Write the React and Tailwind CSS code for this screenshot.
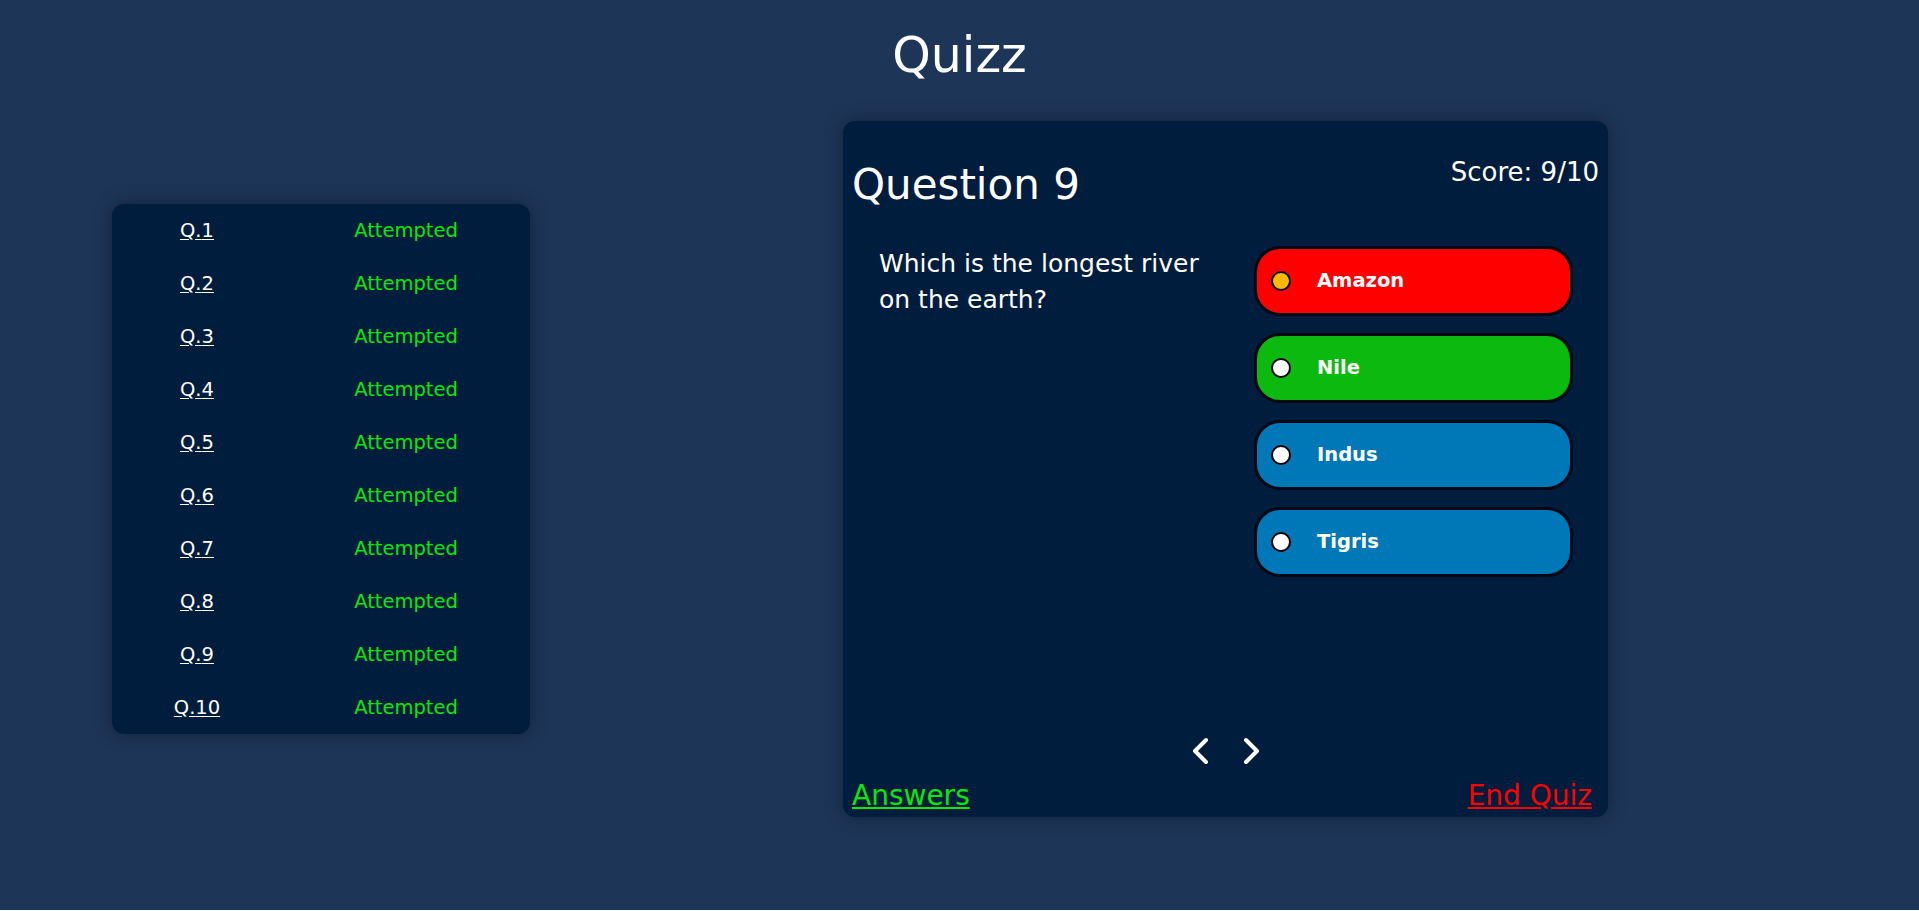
import React from "react";

const rows = Array.from({ length: 10 }, (_, i) => i + 1);

const options = [
  { label: "Amazon", bg: "bg-[#ff0000]", dot: "bg-[#ffb703]" },
  { label: "Nile", bg: "bg-[#0cb90f]", dot: "bg-white" },
  { label: "Indus", bg: "bg-[#0077b6]", dot: "bg-white" },
  { label: "Tigris", bg: "bg-[#0077b6]", dot: "bg-white" },
];

export default function App() {
  return (
    <div className="h-[910px] bg-[#1d3557] font-['DejaVu_Sans',Verdana,sans-serif] text-white">
      <div className="pt-[31px] text-center text-[49px] leading-[49px]">Quizz</div>
      <div className="mt-[41px] flex items-center pl-[112px] gap-[313px]">
        {/* Left list */}
        <div className="w-[418px] rounded-[12px] bg-[#001d3d] shadow-[0_0_18px_rgba(0,0,0,0.35)]">
          {rows.map((n) => (
            <div key={n} className="grid h-[53px] grid-cols-[170px_248px] items-center text-[19.5px]">
              <span className="text-center underline underline-offset-2">Q.{n}</span>
              <span className="text-center text-[#0ce60c]">Attempted</span>
            </div>
          ))}
        </div>

        {/* Card */}
        <div className="flex h-[696px] w-[765px] flex-col rounded-[12px] bg-[#001d3d] pt-[32px] shadow-[0_0_18px_rgba(0,0,0,0.35)]">
          <div className="flex items-start justify-between px-[9px]">
            <div className="text-[42px]">Question 9</div>
            <div className="text-[26px]">Score: 9/10</div>
          </div>
          <div className="mt-[30px] flex items-start pl-[36px] pr-[35px]">
            <div className="w-[340px] text-[25px] leading-[36px]">
              Which is the longest river on the earth?
            </div>
            <div className="ml-auto flex w-[319px] flex-col gap-[17px]">
              {options.map((o) => (
                <div
                  key={o.label}
                  className={`flex h-[70px] items-center rounded-[26px] border-[3px] border-[#000814] ${o.bg}`}
                >
                  <span className={`ml-[14px] h-[20px] w-[20px] rounded-full border-2 border-black ${o.dot}`} />
                  <span className="ml-[26px] text-[19.5px] font-bold">{o.label}</span>
                </div>
              ))}
            </div>
          </div>
          <div className="flex-1" />
          <div className="mb-[15px] flex h-[28px] items-center justify-center gap-[34px]">
            <svg width="17" height="28" viewBox="0 0 17 28" fill="none">
              <polyline points="14,3 3,14 14,25" stroke="white" strokeWidth="4" strokeLinecap="round" strokeLinejoin="round" />
            </svg>
            <svg width="17" height="28" viewBox="0 0 17 28" fill="none">
              <polyline points="3,3 14,14 3,25" stroke="white" strokeWidth="4" strokeLinecap="round" strokeLinejoin="round" />
            </svg>
          </div>
          <div className="flex justify-between pb-[5px] pl-[9px] pr-[16px] text-[28px] leading-[32px]">
            <span className="text-[#0ce60c] underline">Answers</span>
            <span className="text-[#ff0000] underline">End Quiz</span>
          </div>
        </div>
      </div>
    </div>
  );
}
